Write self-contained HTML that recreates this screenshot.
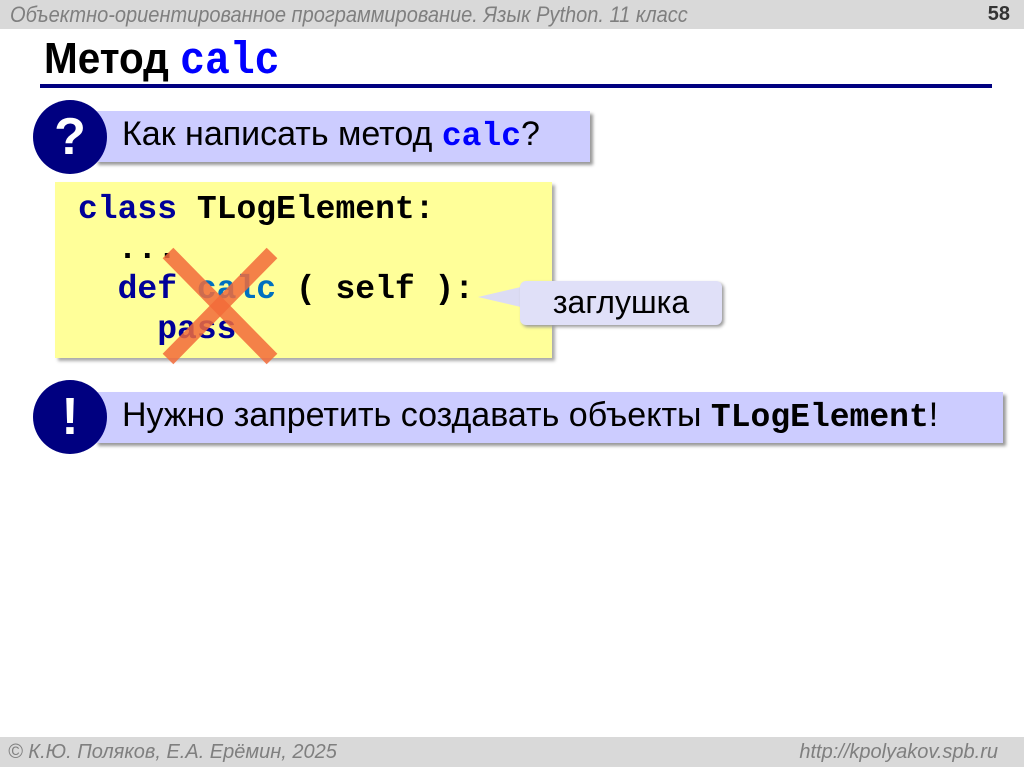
<!DOCTYPE html>
<html><head><meta charset="utf-8"><style>
body{margin:0;width:1024px;height:767px;background:#fff;position:relative;overflow:hidden;font-family:"Liberation Sans",sans-serif;}
.abs{position:absolute;}
.mono{font-family:"Liberation Mono",monospace;font-weight:bold;}
.hdr{left:0;top:0;width:1024px;height:29px;background:#d9d9d9;}
.ftr{left:0;top:737px;width:1024px;height:30px;background:#d9d9d9;}
.gray{color:#7f7f7f;font-style:italic;font-size:20px;transform-origin:left top;}
.circ{width:74px;height:74px;border-radius:50%;background:#000080;color:#fff;font-weight:bold;font-family:"Liberation Sans",sans-serif;font-size:52px;text-align:center;line-height:74px;}
.box{background:#ccccff;box-shadow:3px 3px 3px #999;}
.code{font-size:33px;line-height:40px;white-space:pre;}
.kw{color:#000099}
</style></head><body>
<div class="abs hdr"></div>
<div class="abs gray" style="left:10px;top:2px;font-size:22px;transform:scaleX(0.91);">Объектно-ориентированное программирование. Язык Python. 11 класс</div>
<div class="abs" style="right:14px;top:3px;font-weight:bold;font-size:20px;color:#333;">58</div>
<div class="abs" style="left:44px;top:34px;font-size:44px;font-weight:bold;transform:scaleX(0.92);transform-origin:left top;white-space:nowrap;">Метод <span class="mono" style="color:#0000ff;font-size:45px;">calc</span></div>
<div class="abs" style="left:40px;top:84px;width:952px;height:4px;background:#000080;"></div>

<div class="abs box" style="left:95px;top:111px;width:495px;height:51px;"></div>
<div class="abs circ" style="left:33px;top:100px;">?</div>
<div class="abs" style="left:122px;top:115px;font-size:34px;white-space:nowrap;">Как написать метод <span class="mono" style="color:#0000ff;font-size:33px;">calc</span>?</div>

<div class="abs" style="left:55px;top:182px;width:497px;height:176px;background:#ffff99;box-shadow:3px 3px 3px #aaa;"></div>
<div class="abs mono code" style="left:78px;top:190px;"><span class="kw">class</span> TLogElement:
  ...
  <span class="kw">def</span> <span style="color:#0070c0">calc</span> ( self ):
    <span class="kw">pass</span></div>
<svg class="abs" style="left:160px;top:245px" width="122" height="122"><g stroke="#f26b3a" stroke-opacity="0.85" stroke-width="15"><line x1="8" y1="8" x2="112" y2="114"/><line x1="112" y1="8" x2="8" y2="114"/></g></svg>

<svg class="abs" style="left:470px;top:278px" width="260" height="55"><path d="M8 19 L55 8 L55 30 Z" fill="#dcdcf4"/></svg>
<div class="abs" style="left:520px;top:281px;width:202px;height:44px;background:#e0e0f8;border-radius:6px;box-shadow:2px 2px 3px #999;font-size:32px;text-align:center;line-height:42px;">заглушка</div>

<div class="abs box" style="left:95px;top:392px;width:908px;height:51px;"></div>
<div class="abs circ" style="left:33px;top:380px;">!</div>
<div class="abs" style="left:122px;top:396px;font-size:34px;white-space:nowrap;">Нужно запретить создавать объекты <span class="mono" style="font-size:33px;">TLogElement</span>!</div>

<div class="abs ftr"></div>
<div class="abs gray" style="left:8px;top:741px;">© К.Ю. Поляков, Е.А. Ерёмин, 2025</div>
<div class="abs gray" style="right:26px;top:741px;">http://kpolyakov.spb.ru</div>
</body></html>
